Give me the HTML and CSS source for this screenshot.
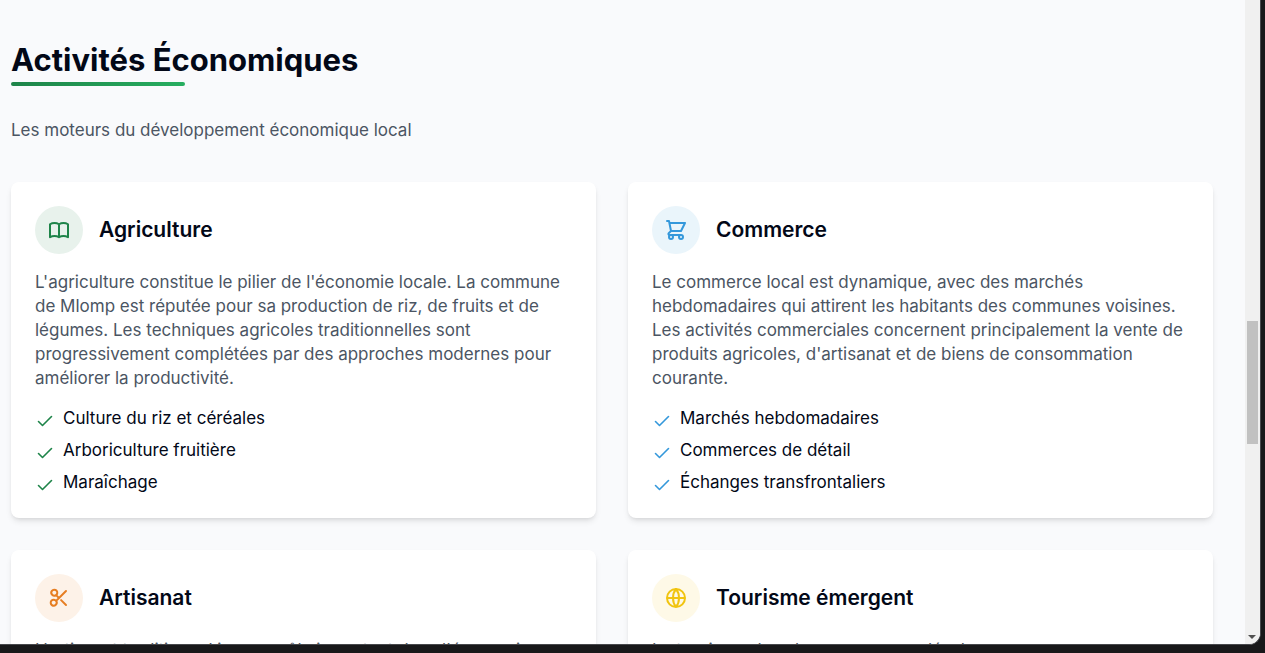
FILE: index.html
```html
<!DOCTYPE html>
<html lang="fr">
<head>
<meta charset="utf-8">
<title>Activités Économiques</title>
<link rel="stylesheet" href="styles.css">
</head>
<body>
<div class="window">
  <main class="page">
    <header class="intro">
      <h1 class="title">Activités Économiques</h1>
      <p class="lead">Les moteurs du développement économique local</p>
    </header>
    <section class="cards">
      <article class="card green">
        <div class="card-head">
          <span class="badge"><svg viewBox="0 0 24 24" width="24" height="24"><path d="M12 6.25v13M12 6.25C10.8 5.5 9.200 5 7.500 5S4.200 5.500 3 6.250v13C4.200 18.500 5.800 18 7.500 18s3.300.5 4.500 1.250m0-13C13.200 5.500 14.800 5 16.500 5s3.300.5 4.500 1.250v13C19.800 18.500 18.200 18 16.500 18s-3.300.5-4.500 1.250"/></svg></span>
          <h2 class="card-title">Agriculture</h2>
        </div>
        <p class="text">L'agriculture constitue le pilier de l'économie locale. La commune<br>de Mlomp est réputée pour sa production de riz, de fruits et de<br>légumes. Les techniques agricoles traditionnelles sont<br>progressivement complétées par des approches modernes pour<br>améliorer la productivité.</p>
        <ul class="list">
          <li><svg class="check" viewBox="0 0 20 20" width="20" height="20"><path d="M3.500 11.500l4 4 9-9"/></svg>Culture du riz et céréales</li>
          <li><svg class="check" viewBox="0 0 20 20" width="20" height="20"><path d="M3.500 11.500l4 4 9-9"/></svg>Arboriculture fruitière</li>
          <li><svg class="check" viewBox="0 0 20 20" width="20" height="20"><path d="M3.500 11.500l4 4 9-9"/></svg>Maraîchage</li>
        </ul>
      </article>
      <article class="card blue">
        <div class="card-head">
          <span class="badge"><svg viewBox="0 0 24 24" width="24" height="24"><path d="M3 3h2l.4 2M7 13h10l4-8H5.400M7 13L5.400 5M7 13l-2.300 2.300c-.6.6-.2 1.700.7 1.700H17m0 0a2 2 0 100 4 2 2 0 000-4zm-8 2a2 2 0 11-4 0 2 2 0 014 0z"/></svg></span>
          <h2 class="card-title">Commerce</h2>
        </div>
        <p class="text">Le commerce local est dynamique, avec des marchés<br>hebdomadaires qui attirent les habitants des communes voisines.<br>Les activités commerciales concernent principalement la vente de<br>produits agricoles, d'artisanat et de biens de consommation<br>courante.</p>
        <ul class="list">
          <li><svg class="check" viewBox="0 0 20 20" width="20" height="20"><path d="M3.500 11.500l4 4 9-9"/></svg>Marchés hebdomadaires</li>
          <li><svg class="check" viewBox="0 0 20 20" width="20" height="20"><path d="M3.500 11.500l4 4 9-9"/></svg>Commerces de détail</li>
          <li><svg class="check" viewBox="0 0 20 20" width="20" height="20"><path d="M3.500 11.500l4 4 9-9"/></svg>Échanges transfrontaliers</li>
        </ul>
      </article>
      <article class="card orange">
        <div class="card-head">
          <span class="badge"><svg viewBox="0 0 24 24" width="24" height="24"><path d="M14.100 14.100L19 19m-7-7l7-7m-7 7l-2.900 2.900M12 12L9.100 9.100m0 5.800a3 3 0 10-4.200 4.200 3 3 0 004.200-4.200zm0-5.800a3 3 0 10-4.200-4.200 3 3 0 004.200 4.200z"/></svg></span>
          <h2 class="card-title">Artisanat</h2>
        </div>
        <p class="text">L'artisanat traditionnel joue un rôle important dans l'économie</p>
      </article>
      <article class="card yellow">
        <div class="card-head">
          <span class="badge"><svg viewBox="0 0 24 24" width="24" height="24"><path d="M21 12a9 9 0 01-18 0 9 9 0 0118 0zM3 12h18M12 3c2 2.400 3 5.400 3 9s-1 6.600-3 9c-2-2.400-3-5.400-3-9s1-6.600 3-9z"/></svg></span>
          <h2 class="card-title">Tourisme émergent</h2>
        </div>
        <p class="text">Le tourisme dans la commune se développe</p>
      </article>
    </section>
  </main>
  <div class="scrollbar"><span></span><div class="thumb"></div><svg class="arrow" viewBox="0 0 8 4" width="8" height="4"><path d="M0 0h8L4 4z"/></svg></div>
</div>
</body>
</html>
```
FILE: styles.css
```css
* { box-sizing: border-box; margin: 0; padding: 0; }
body { height: 100vh; overflow: hidden; padding: 0 4px 8px 0; background: #18181a; font-family: Inter, sans-serif; font-size: 17px; line-height: 24px; color: #020817; }
.window { height: 100%; display: flex; overflow: hidden; background: #f9fafb; border-right: 1px solid #47484c; border-bottom: 1px solid #47484c; border-bottom-right-radius: 12px; }
.page { flex: 1; min-width: 0; padding: 40px 32px 0 11px; background: #f9fafc; }
.title { width: fit-content; font-size: 31px; line-height: 40px; font-weight: 700; }
.title::after { content: ""; display: block; width: 50%; height: 4px; margin-top: 2px; border-radius: 2px; background: linear-gradient(90deg, #1e8449, #27ae60); }
.lead { margin-top: 32px; color: #4b5563; }
.cards { margin-top: 40px; display: grid; grid-template-columns: 1fr 1fr; gap: 32px; }
.card { min-width: 0; padding: 24px; background: #fff; border-radius: 8px; box-shadow: 0 4px 6px -1px rgba(0,0,0,.1), 0 2px 4px -2px rgba(0,0,0,.1); }
.card-head { display: flex; align-items: center; gap: 16px; margin-bottom: 16px; }
.badge { width: 48px; height: 48px; border-radius: 50%; display: flex; align-items: center; justify-content: center; }
.badge svg, .check { fill: none; stroke: currentColor; stroke-width: 2; stroke-linecap: round; stroke-linejoin: round; }
.card-title { font-size: 21px; line-height: 28px; font-weight: 600; }
.text { color: #4b5563; white-space: nowrap; margin-bottom: 16px; }
.list { list-style: none; display: grid; gap: 8px; }
.list li { display: flex; align-items: flex-start; gap: 8px; }
.check { margin-top: 4px; stroke-width: 1.6; }
.green .badge { background: #e8f2ec; }
.green .badge, .green .check { color: #1e8449; }
.blue .badge { background: #eaf5fb; }
.blue .badge, .blue .check { color: #3498db; }
.orange .badge { background: #fdf2e8; color: #e67e22; }
.yellow .badge { background: #fef9e7; color: #f1c40f; }
.scrollbar { width: 15px; background: #f0f0f0; display: grid; grid-template-rows: 321fr 123fr 195fr; justify-items: center; padding: 0 1px 5px 0; }
.thumb { width: 11px; background: #c1c1c1; }
.arrow { fill: #505050; align-self: end; }
```
